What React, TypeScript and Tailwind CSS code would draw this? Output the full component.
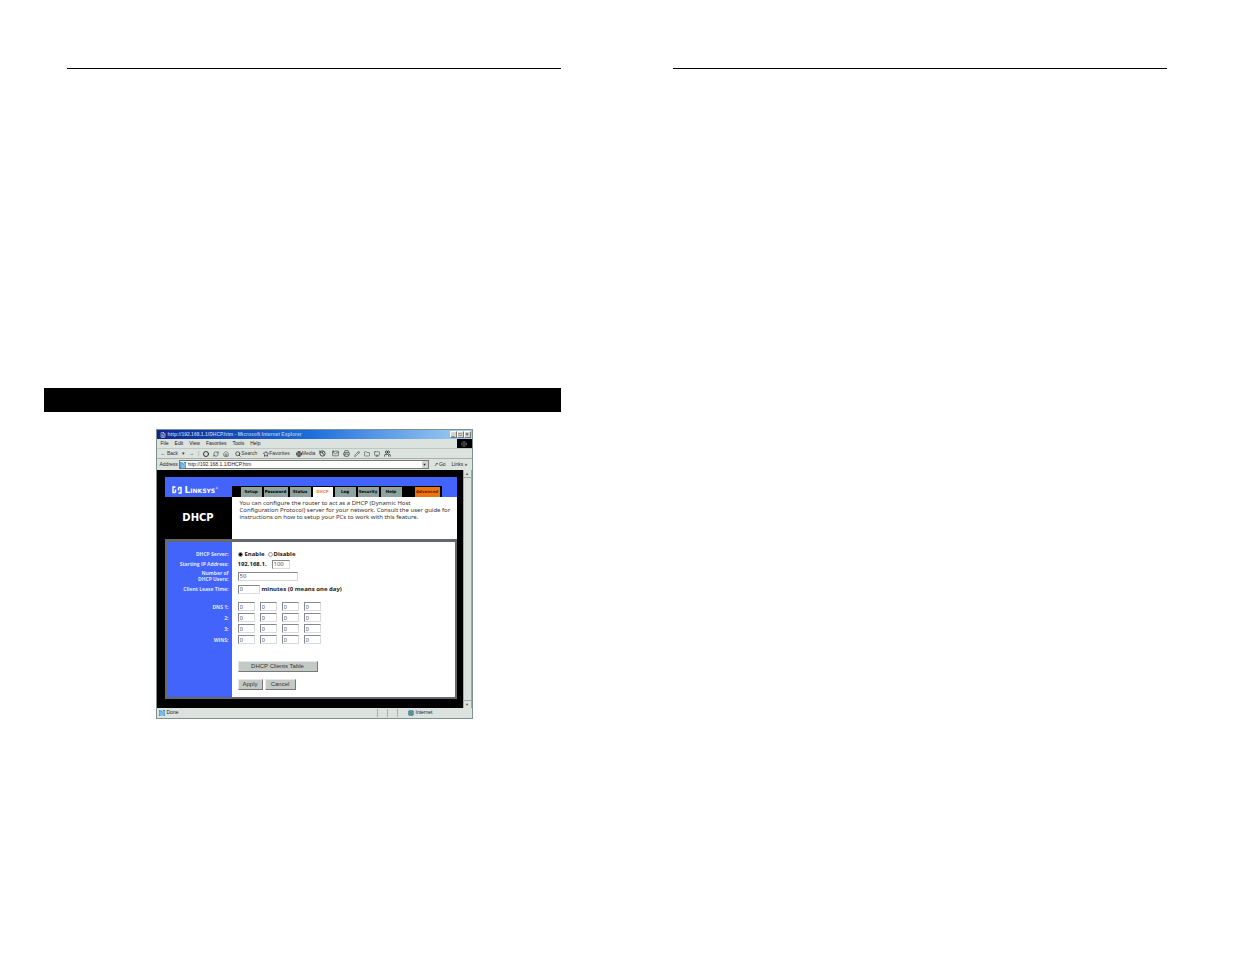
import React from 'react';
import { Circle, FileText, Folder, Home, Mail, Printer, Globe, Search, Star, History, Pencil, RefreshCw, Monitor, Users } from 'lucide-react';

const menus = ['File', 'Edit', 'View', 'Favorites', 'Tools', 'Help'];

const tabs = [
  { label: 'Setup', width: 'w-[21px]' },
  { label: 'Password', width: 'w-[24px]' },
  { label: 'Status', width: 'w-[21px]' },
  { label: 'DHCP', width: 'w-[20px]', active: true },
  { label: 'Log', width: 'w-[21px]' },
  { label: 'Security', width: 'w-[21px]' },
  { label: 'Help', width: 'w-[21px]' },
];

const servers = [
  { id: 'dns1', label: 'DNS 1:' },
  { id: 'dns2', label: '2:' },
  { id: 'dns3', label: '3:' },
  { id: 'wins', label: 'WINS:' },
];

const field = 'h-[9px] border border-[#d8dcdc] border-t-[#888] border-l-[#888] bg-white pl-px text-[6px] leading-[7px] font-normal text-[#555] outline-none';
const winButton = "border border-[#e4e8e4] border-r-[#777] border-b-[#777] bg-[#c3cac6] text-center font-['Liberation_Sans'] text-[6px] leading-[9px] font-normal text-[#333]";

function TitleBar() {
  return (
    <div className="flex h-[9px] items-center bg-linear-to-r from-[#10268c] via-[#1f6fdc] to-[#a4d0f0] pr-px pl-[3px]">
      <FileText size={6} className="mr-[2px] text-white" />
      <h2 className="flex-1 whitespace-nowrap text-[5px] leading-[9px] font-bold text-[#a8c4f0]">http://192.168.1.1/DHCP.htm - Microsoft Internet Explorer</h2>
      <div className="flex">
        {['_', '□', '×'].map((glyph) => (
          <button key={glyph} aria-label={glyph} className="flex h-[7px] w-[7px] items-center justify-center border border-[#777] border-t-white border-l-white bg-[#d0d6d3] text-[5px] leading-[5px] text-black">
            {glyph}
          </button>
        ))}
      </div>
    </div>
  );
}

function ToolBar() {
  return (
    <div className="flex h-[11px] items-center gap-[4px] border-y border-b-[#a8b0ac] border-t-[#c0c6c2] px-[4px] text-[5px] text-[#333]">
      <button className="whitespace-nowrap">← Back</button>
      <span>▾</span>
      <span>→</span>
      <span className="text-[#999]">|</span>
      <Circle size={6} strokeWidth={4} />
      <RefreshCw size={6} />
      <Home size={6} />
      <button className="ml-[2px] flex items-center"><Search size={6} strokeWidth={3} />Search</button>
      <button className="ml-[2px] flex items-center"><Star size={6} strokeWidth={3} />Favorites</button>
      <button className="ml-[2px] flex items-center"><Globe size={6} strokeWidth={3} />Media</button>
      <History size={7} strokeWidth={3} />
      <Mail size={7} className="ml-[2px]" />
      <Printer size={7} />
      <Pencil size={6} />
      <Folder size={6} />
      <Monitor size={6} />
      <Users size={7} strokeWidth={3} />
    </div>
  );
}

function AddressBar() {
  return (
    <div className="flex h-[11px] items-center text-[5px] text-[#222]">
      <label htmlFor="address" className="w-[22px] pl-[3px]">Address</label>
      <div className="flex h-[9px] flex-1 items-center border border-[#777] bg-white">
        <FileText size={6} className="mr-[2px] bg-[#2b8fd0] text-white" />
        <input id="address" defaultValue="http://192.168.1.1/DHCP.htm" className="h-[7px] min-w-0 flex-1 outline-none" />
        <button aria-label="Show addresses" className="h-[7px] w-[6px] bg-[#d0d6d3] text-[4px] leading-[7px]">▼</button>
      </div>
      <button className="ml-[5px] w-[18px] text-left">↗ Go</button>
      <button className="w-[20px] text-left">Links »</button>
    </div>
  );
}

function Banner() {
  return (
    <header className="flex h-[20px] bg-[#4364fb]">
      <div className="flex w-[67px] items-center pt-[5px] pl-[7px] text-white">
        <svg viewBox="0 0 10 8" className="mr-[3px] h-[8px] w-[10px]" fill="none" stroke="currentColor" strokeWidth="1.4">
          <path d="M3.5 1H1v5.5h2.5M6.5 1.5H9V7H6.5M3.5 6.5V3.5M6.5 1.5v3" />
        </svg>
        <span className="text-[9px] leading-[8px] font-bold" style={{ fontVariant: 'small-caps' }}>Linksys</span>
        <sup className="text-[3px]">®</sup>
      </div>
      <nav className="mt-[9px] flex h-[11px] items-stretch bg-black pr-[2px] pl-[9px]">
        {tabs.map((tab) => (
          <a
            key={tab.label}
            href="#"
            className={`${tab.width} mr-[2px] mt-px overflow-hidden text-center text-[4px] leading-[10px] font-bold ${tab.active ? 'bg-white text-[#f58634]' : 'bg-[#8fa39f] text-black'}`}
          >
            {tab.label}
          </a>
        ))}
        <a href="#" className="mt-px ml-[11px] w-[25px] bg-[#ee7411] text-center text-[4px] leading-[10px] font-bold text-[#5c2600]">Advanced</a>
      </nav>
    </header>
  );
}

type RowProps = {
  label: React.ReactNode;
  htmlFor?: string;
  height: string;
  children?: React.ReactNode;
};

function Row({ label, htmlFor, height, children }: RowProps) {
  return (
    <div className={`flex ${height}`}>
      <div className="flex w-[65px] shrink-0 items-center justify-end bg-[#4364fb] pr-[3px] text-right text-[5px] leading-[6px] text-[#dfe6ff]">
        <label htmlFor={htmlFor} className="font-['Open_Sans'] font-bold whitespace-nowrap">{label}</label>
      </div>
      <div className="flex flex-1 items-center pl-[6px] font-['Noto_Sans'] text-[6px] leading-[8px] font-bold text-[#222]">{children}</div>
    </div>
  );
}

function SetupForm() {
  return (
    <form className="border-2 border-t-3 border-[#66696b] bg-white" onSubmit={(e) => e.preventDefault()}>
      <Row label="" height="h-[7px]" />
      <Row label="DHCP Server:" height="h-[10px]">
        <input id="enable" type="radio" name="dhcp" defaultChecked className="mr-[2px] h-[5px] w-[5px] appearance-none rounded-full border border-[#999] checked:bg-black" />
        <label htmlFor="enable" className="mr-[3px]">Enable</label>
        <input id="disable" type="radio" name="dhcp" className="mr-px h-[5px] w-[5px] appearance-none rounded-full border border-[#999] checked:bg-black" />
        <label htmlFor="disable">Disable</label>
      </Row>
      <Row label="Starting IP Address:" htmlFor="start" height="h-[10px]">
        <span className="w-[34px]">192.168.1.</span>
        <input id="start" defaultValue="100" className={`${field} w-[18px]`} />
      </Row>
      <Row label={<>Number of<br />DHCP Users:</>} htmlFor="users" height="h-[14px]">
        <input id="users" defaultValue="50" className={`${field} w-[60px]`} />
      </Row>
      <Row label="Client Lease Time:" htmlFor="lease" height="h-[12px]">
        <input id="lease" defaultValue="0" className={`${field} mr-[2px] w-[22px]`} />
        <span>minutes (0 means one day)</span>
      </Row>
      <Row label="" height="h-[6px]" />
      {servers.map((server) => (
        <Row key={server.id} label={server.label} htmlFor={`${server.id}-0`} height="h-[11px]">
          <div className="flex gap-[5px]">
            {[0, 1, 2, 3].map((n) => (
              <input key={n} id={`${server.id}-${n}`} aria-label={`${server.label} ${n + 1}`} defaultValue="0" className={`${field} w-[17px]`} />
            ))}
          </div>
        </Row>
      ))}
      <Row label="" height="h-[16px]" />
      <Row label="" height="h-[11px]">
        <button type="button" className={`${winButton} w-[80px]`}>DHCP Clients Table</button>
      </Row>
      <Row label="" height="h-[7px]" />
      <Row label="" height="h-[11px]">
        <button type="submit" className={`${winButton} mr-[2px] w-[25px]`}>Apply</button>
        <button type="reset" className={`${winButton} w-[31px]`}>Cancel</button>
      </Row>
      <Row label="" height="h-[7px]" />
    </form>
  );
}

function BrowserWindow() {
  return (
    <section className="mx-auto mt-[17px] w-[317px] border border-[#7d918d] bg-[#dce3df] font-['Liberation_Sans',sans-serif]">
      <TitleBar />
      <div className="flex h-[9px] items-center gap-[6px] pl-[4px] text-[5px] text-[#222]">
        {menus.map((menu) => (
          <button key={menu}>{menu}</button>
        ))}
        <div className="ml-auto flex h-[9px] w-[15px] items-center justify-center bg-black text-[#777]">
          <Globe size={6} />
        </div>
      </div>
      <ToolBar />
      <AddressBar />
      <div className="flex">
        <main className="flex-1 bg-black pt-[7px] pr-[6px] pb-[9px] pl-[8px] font-['DejaVu_Sans',sans-serif]">
          <Banner />
          <div className="flex h-[42px] bg-white">
            <h1 className="w-[67px] bg-black text-center text-[10px] leading-[42px] font-bold text-white">DHCP</h1>
            <p className="flex-1 pt-[3px] pl-[8px] font-['Noto_Sans'] text-[6px] leading-[7px] whitespace-nowrap text-[#333]">
              You can configure the router to act as a DHCP (Dynamic Host
              <br />
              Configuration Protocol) server for your network. Consult the user guide for
              <br />
              instructions on how to setup your PCs to work with this feature.
            </p>
          </div>
          <SetupForm />
        </main>
        <div className="flex w-[9px] flex-col justify-between border-x border-[#9eaaa6] text-center text-[4px] leading-[7px] text-[#555]">
          <button aria-label="Scroll up" className="border-b border-[#9eaaa6]">▲</button>
          <button aria-label="Scroll down" className="border-t border-[#9eaaa6]">▼</button>
        </div>
      </div>
      <footer className="flex h-[10px] items-center px-[2px] text-[5px] text-[#222]">
        <FileText size={6} className="mr-[2px] bg-[#2b8fd0] text-white" />
        <span className="flex-1">Done</span>
        <div className="flex h-[8px] gap-[9px] border-l border-[#a8b0ac] pl-[9px]">
          <span className="border-l border-[#a8b0ac]" />
          <span className="border-l border-[#a8b0ac]" />
        </div>
        <div className="flex w-[72px] items-center pl-[10px]">
          <Globe size={6} className="mr-[2px] rounded-full bg-[#245c6c] text-[#9cc]" />
          Internet
        </div>
      </footer>
    </section>
  );
}

export default function App() {
  return (
    <div className="grid min-h-screen grid-cols-[517fr_494fr] gap-28 bg-white pt-[68px] pr-[68px] pl-11">
      <article>
        <hr className="ml-[23px] border-black" />
        <div className="mt-[319px] h-6 bg-black" />
        <div className="pl-[23px]">
          <BrowserWindow />
        </div>
      </article>
      <article>
        <hr className="border-black" />
      </article>
    </div>
  );
}
